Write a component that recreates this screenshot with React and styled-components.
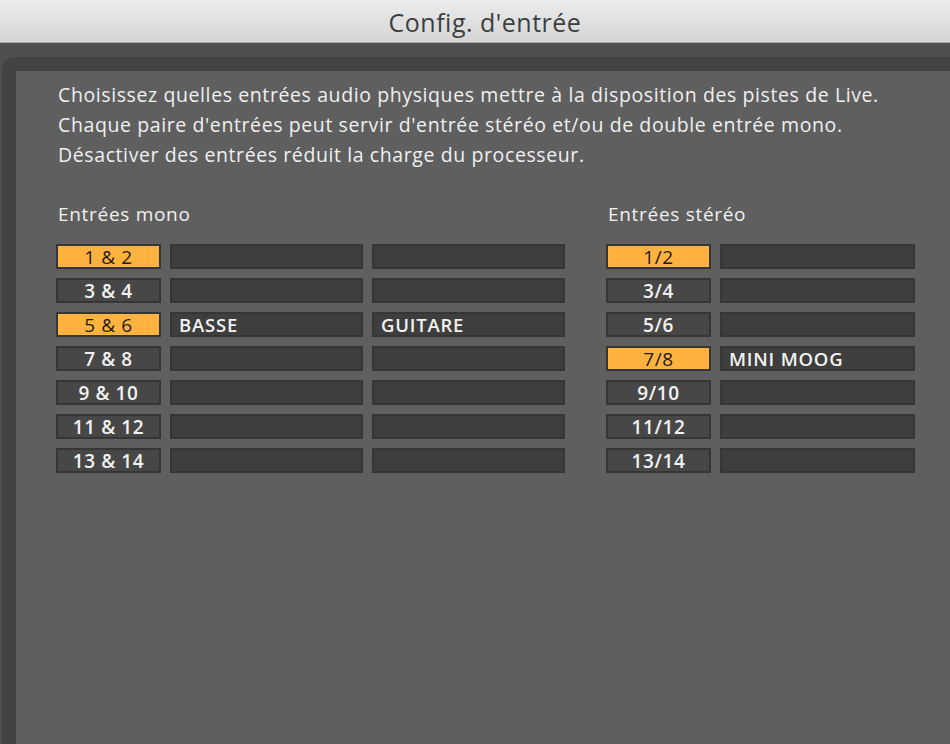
import React from "react";
import styled, { createGlobalStyle } from "styled-components";

const GlobalStyle = createGlobalStyle`
  html, body {
    margin: 0;
    padding: 0;
    height: 100%;
    background: #4f4f4f;
    overflow: hidden;
  }
  #root {
    height: 100%;
  }
`;

const Window = styled.div`
  display: flex;
  flex-direction: column;
  height: 744px;
  width: 950px;
  font-family: "Open Sans", "Noto Sans", sans-serif;
`;

const TitleBar = styled.div`
  height: 43px;
  flex: none;
  display: flex;
  align-items: center;
  justify-content: center;
  padding: 2px 0 0 20px;
  box-sizing: border-box;
  background: linear-gradient(#ececec, #d5d5d5);
  border-bottom: 1px solid #a8a8a8;
  color: #3e3e3e;
  font-size: 25px;
  letter-spacing: 0.5px;
`;

const Outer = styled.div`
  flex: 1;
  display: flex;
  padding: 14px 0 0 2px;
  background: #4f4f4f;
`;

const Frame = styled.div`
  flex: 1;
  display: flex;
  padding: 14px 0 0 14px;
  background: #434343;
  border-top-left-radius: 12px;
`;

const Panel = styled.div`
  flex: 1;
  background: #5f5f5f;
  padding: 9px 0 0 40px;
  color: #f0f0f0;
`;

const Intro = styled.p`
  margin: 0 0 0 2px;
  font-size: 19.5px;
  line-height: 30px;
  font-weight: 500;
  letter-spacing: 0.6px;
  white-space: nowrap;
`;

const Sections = styled.div`
  display: flex;
  gap: 41px;
  margin-top: 29px;
`;

const Section = styled.div`
  display: flex;
  flex-direction: column;
`;

const Heading = styled.h3`
  margin: 0 0 15px 2px;
  font-size: 19px;
  line-height: 30px;
  font-weight: 500;
  letter-spacing: 0.7px;
`;

const Rows = styled.div`
  display: grid;
  grid-template-columns: ${(p) => p.$cols};
  column-gap: 9px;
  row-gap: 9px;
`;

const Toggle = styled.div`
  box-sizing: border-box;
  height: 25px;
  display: flex;
  align-items: center;
  justify-content: center;
  border: 2px solid #363636;
  background: ${(p) => (p.$on ? "#ffb23d" : "#474747")};
  color: ${(p) => (p.$on ? "#1c1c1c" : "#f2f2f2")};
  font-size: 19px;
  letter-spacing: 0.6px;
  font-weight: ${(p) => (p.$on ? 400 : 600)};
`;

const Field = styled.div`
  box-sizing: border-box;
  height: 25px;
  display: flex;
  align-items: center;
  padding-left: 7px;
  border: 2px solid #363636;
  background: #3e3e3e;
  color: #f2f2f2;
  font-size: 18.5px;
  letter-spacing: 0.8px;
  font-weight: 600;
`;

const mono = [
  { label: "1 & 2", on: true, names: ["", ""] },
  { label: "3 & 4", on: false, names: ["", ""] },
  { label: "5 & 6", on: true, names: ["BASSE", "GUITARE"] },
  { label: "7 & 8", on: false, names: ["", ""] },
  { label: "9 & 10", on: false, names: ["", ""] },
  { label: "11 & 12", on: false, names: ["", ""] },
  { label: "13 & 14", on: false, names: ["", ""] },
];

const stereo = [
  { label: "1/2", on: true, name: "" },
  { label: "3/4", on: false, name: "" },
  { label: "5/6", on: false, name: "" },
  { label: "7/8", on: true, name: "MINI MOOG" },
  { label: "9/10", on: false, name: "" },
  { label: "11/12", on: false, name: "" },
  { label: "13/14", on: false, name: "" },
];

export default function App() {
  return (
    <Window>
      <GlobalStyle />
      <TitleBar>Config. d'entrée</TitleBar>
      <Outer>
        <Frame>
          <Panel>
            <Intro>
              Choisissez quelles entrées audio physiques mettre à la disposition des pistes de Live.
              <br />
              Chaque paire d'entrées peut servir d'entrée stéréo et/ou de double entrée mono.
              <br />
              Désactiver des entrées réduit la charge du processeur.
            </Intro>
            <Sections>
              <Section>
                <Heading>Entrées mono</Heading>
                <Rows $cols="105px 193px 193px">
                  {mono.map((r) => (
                    <React.Fragment key={r.label}>
                      <Toggle $on={r.on}>{r.label}</Toggle>
                      <Field>{r.names[0]}</Field>
                      <Field>{r.names[1]}</Field>
                    </React.Fragment>
                  ))}
                </Rows>
              </Section>
              <Section>
                <Heading>Entrées stéréo</Heading>
                <Rows $cols="105px 195px">
                  {stereo.map((r) => (
                    <React.Fragment key={r.label}>
                      <Toggle $on={r.on}>{r.label}</Toggle>
                      <Field>{r.name}</Field>
                    </React.Fragment>
                  ))}
                </Rows>
              </Section>
            </Sections>
          </Panel>
        </Frame>
      </Outer>
    </Window>
  );
}
